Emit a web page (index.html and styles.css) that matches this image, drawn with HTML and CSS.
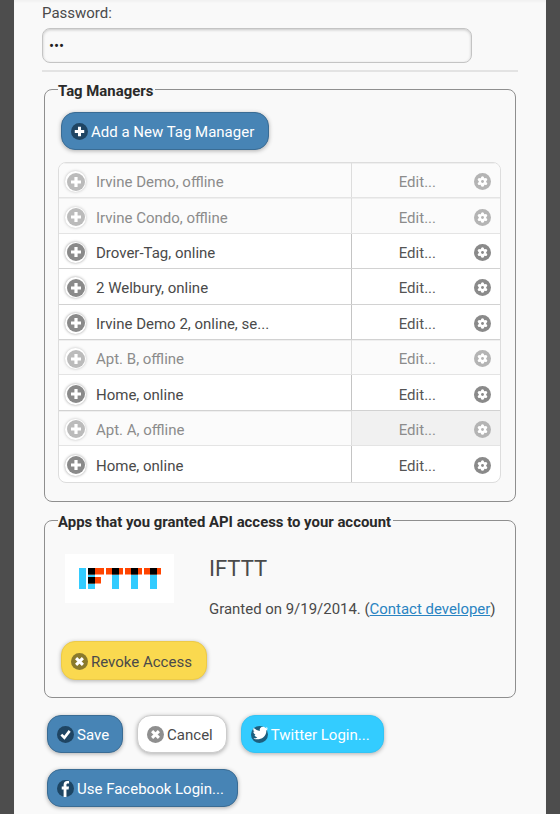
FILE: index.html
```html
<!DOCTYPE html>
<html lang="en">
<head>
<meta charset="utf-8">
<title>Account settings</title>
<link rel="stylesheet" href="styles.css">
</head>
<body>
<svg class="defs" width="0" height="0" aria-hidden="true">
  <symbol id="i-plus" viewBox="0 0 18 18"><circle cx="9" cy="9" r="9" fill="currentColor"/><path d="M9 4v10M4 9h10" stroke="#fff" stroke-width="3.200"/></symbol>
  <symbol id="i-x" viewBox="0 0 18 18"><circle cx="9" cy="9" r="9" fill="currentColor"/><path d="M5.400 5.400l7.200 7.200M12.600 5.400l-7.200 7.200" stroke="#fff" stroke-width="3.200"/></symbol>
  <symbol id="i-check" viewBox="0 0 18 18"><circle cx="9" cy="9" r="9" fill="currentColor"/><path d="M4.600 9.200l3.200 3.200 5.600-7.200" fill="none" stroke="#fff" stroke-width="2.800"/></symbol>
  <symbol id="i-gear" viewBox="0 0 18 18"><circle cx="9" cy="9" r="9" fill="currentColor"/><g fill="#fff"><circle cx="9" cy="9" r="3.900"/><circle cx="9" cy="5.100" r="1.600"/><circle cx="9" cy="12.900" r="1.600"/><circle cx="5.600" cy="7" r="1.600"/><circle cx="12.400" cy="7" r="1.600"/><circle cx="5.600" cy="11" r="1.600"/><circle cx="12.400" cy="11" r="1.600"/></g><circle cx="9" cy="9" r="1.500" fill="currentColor"/></symbol>
  <symbol id="i-tw" viewBox="0 0 18 18"><circle cx="9" cy="9" r="9" fill="#1d5f7e"/><path transform="translate(2.500 -.5) scale(.86)" d="M18 3.400c-.8.4-1.500.6-2.300.7.800-.5 1.400-1.300 1.700-2.200-.8.5-1.600.8-2.500 1A4 4 0 0 0 8 6.600C5 6.400 2.200 5 .4 2.700c-1 1.800-.5 4.100 1.200 5.300-.6 0-1.200-.2-1.700-.5 0 1.900 1.300 3.600 3.200 4-.6.200-1.200.2-1.800.1.500 1.600 2 2.700 3.700 2.800A8 8 0 0 1 0 16c5 2.500 16 1 16-9.800.8-.6 1.500-1.800 2-2.800z" fill="#fff"/></symbol>
  <symbol id="i-fb" viewBox="0 0 18 18"><circle cx="9" cy="9" r="9" fill="#1d4563"/><path d="M7 18V10H5V7h2V5c0-2.600 1.500-4 3.700-4 1 0 1.800.1 2.100.1v2.700h-1.400c-1.100 0-1.400.6-1.400 1.400V7h2.700l-.4 3h-2.300v8z" fill="#fff"/></symbol>
</svg>
<main class="page">
  <label class="field-label" for="pw">Password:</label>
  <div class="input" id="pw">•••</div>
  <hr class="rule">

  <fieldset class="box box-tags">
    <legend>Tag Managers</legend>
    <a class="btn btn-blue btn-add"><svg class="ico ico-dark"><use href="#i-plus"/></svg>Add a New Tag Manager</a>
    <ul class="list">
      <li class="row off"><span class="main"><span class="halo"><svg class="ico"><use href="#i-plus"/></svg></span>Irvine Demo, offline</span><span class="edit">Edit...<svg class="ico"><use href="#i-gear"/></svg></span></li>
      <li class="row off"><span class="main"><span class="halo"><svg class="ico"><use href="#i-plus"/></svg></span>Irvine Condo, offline</span><span class="edit">Edit...<svg class="ico"><use href="#i-gear"/></svg></span></li>
      <li class="row"><span class="main"><span class="halo"><svg class="ico"><use href="#i-plus"/></svg></span>Drover-Tag, online</span><span class="edit">Edit...<svg class="ico"><use href="#i-gear"/></svg></span></li>
      <li class="row"><span class="main"><span class="halo"><svg class="ico"><use href="#i-plus"/></svg></span>2 Welbury, online</span><span class="edit">Edit...<svg class="ico"><use href="#i-gear"/></svg></span></li>
      <li class="row"><span class="main"><span class="halo"><svg class="ico"><use href="#i-plus"/></svg></span>Irvine Demo 2, online, se...</span><span class="edit">Edit...<svg class="ico"><use href="#i-gear"/></svg></span></li>
      <li class="row off"><span class="main"><span class="halo"><svg class="ico"><use href="#i-plus"/></svg></span>Apt. B, offline</span><span class="edit">Edit...<svg class="ico"><use href="#i-gear"/></svg></span></li>
      <li class="row"><span class="main"><span class="halo"><svg class="ico"><use href="#i-plus"/></svg></span>Home, online</span><span class="edit">Edit...<svg class="ico"><use href="#i-gear"/></svg></span></li>
      <li class="row off"><span class="main"><span class="halo"><svg class="ico"><use href="#i-plus"/></svg></span>Apt. A, offline</span><span class="edit edit-hover">Edit...<svg class="ico"><use href="#i-gear"/></svg></span></li>
      <li class="row"><span class="main"><span class="halo"><svg class="ico"><use href="#i-plus"/></svg></span>Home, online</span><span class="edit">Edit...<svg class="ico"><use href="#i-gear"/></svg></span></li>
    </ul>
  </fieldset>

  <fieldset class="box box-apps">
    <legend>Apps that you granted API access to your account</legend>
    <div class="app">
      <div class="logo">
        <svg width="109" height="49" viewBox="0 0 109 49" role="img" aria-label="IFTTT logo">
          <g fill="#33ccff"><rect x="14" y="14" width="7" height="21"/><rect x="23" y="14" width="7" height="21"/><rect x="47" y="14" width="7" height="21"/><rect x="66" y="14" width="7" height="21"/><rect x="85" y="14" width="7" height="21"/></g>
          <g fill="#ff4400"><rect x="23" y="14" width="16" height="6.500"/><rect x="23" y="23" width="13" height="6.500"/><rect x="41" y="14" width="17" height="6.500"/><rect x="60" y="14" width="17" height="6.500"/><rect x="79" y="14" width="17" height="6.500"/></g>
          <g fill="#000"><rect x="23" y="14" width="7" height="6.500"/><rect x="23" y="23" width="7" height="6.500"/><rect x="47" y="14" width="7" height="6.500"/><rect x="66" y="14" width="7" height="6.500"/><rect x="85" y="14" width="7" height="6.500"/></g>
        </svg>
      </div>
      <div class="app-info">
        <h3 class="app-name">IFTTT</h3>
        <p class="app-note">Granted on 9/19/2014. (<a class="link">Contact developer</a>)</p>
      </div>
    </div>
    <a class="btn btn-yellow btn-revoke"><svg class="ico ico-olive"><use href="#i-x"/></svg>Revoke Access</a>
  </fieldset>

  <div class="actions">
    <a class="btn btn-blue"><svg class="ico ico-dark"><use href="#i-check"/></svg>Save</a>
    <a class="btn btn-white"><svg class="ico ico-grey"><use href="#i-x"/></svg>Cancel</a>
    <a class="btn btn-sky"><svg class="ico"><use href="#i-tw"/></svg>Twitter Login...</a>
    <a class="btn btn-blue"><svg class="ico"><use href="#i-fb"/></svg>Use Facebook Login...</a>
  </div>
</main>
</body>
</html>
```
FILE: styles.css
```css
* { box-sizing: border-box; }
html, body { margin: 0; height: 100%; }
body {
  background: #4d4d4d;
  font-family: Roboto, "Liberation Sans", sans-serif;
  color: #4a4a4a;
  overflow: hidden;
}
.defs { position: absolute; }
.page {
  width: 532px;
  height: 814px;
  margin-left: 14px;
  background: #f9f9f9;
  box-shadow: inset 0 2px 2px rgba(0,0,0,.03);
  padding: 4px 28px 0;
  overflow: hidden;
}
.field-label {
  display: block;
  font-size: 15px;
  line-height: 19px;
  color: #4a4a4a;
  margin-bottom: 5px;
}
.input {
  width: 430px;
  height: 35px;
  border: 1px solid #c4c4c4;
  border-radius: 8px;
  box-shadow: inset 0 1px 3px rgba(0,0,0,.2);
  background: #f9f9f9;
  padding-left: 6px;
  font-size: 15px;
  line-height: 35px;
  color: #222;
}
.rule {
  border: 0;
  border-top: 2px solid #e3e3e3;
  margin: 7px 0 0;
  width: 476px;
}
.box {
  margin: 0 0 0 2px;
  width: 472px;
  border: 1px solid #8f8f8f;
  border-radius: 8px;
  padding: 0 14px;
  min-inline-size: 0;
}
.box legend {
  font-size: 14.900px;
  font-weight: 700;
  color: #2a2a2a;
  line-height: 17px;
  padding: 4px 2px 0 0;
  margin-left: -1px;
}
.box-tags { margin-top: 7px; height: 423px; padding-top: 12px; }
.box-apps { margin-top: 8px; height: 188px; padding-top: 23px; }
.btn {
  display: inline-flex;
  align-items: center;
  height: 38px;
  padding: 2px 13px 0 9px;
  border-radius: 14px;
  font-size: 15px;
  white-space: nowrap;
  box-shadow: 0 1px 4px rgba(0,0,0,.3);
}
.ico { width: 17px; height: 17px; flex: none; }
.btn .ico { margin-right: 3px; margin-top: -1px; }
.ico-dark { color: #1f4563; }
.ico-olive { color: #8a7a2c; }
.ico-grey { color: #8f8f8f; }
.btn-blue { background: #4784b5; border: 1px solid #3a6c94; color: #fff; }
.btn-yellow { background: #fad94f; border: 1px solid #edcb47; color: #4a4a4a; }
.btn-white { background: #fff; border: 1px solid #ccc; color: #4a4a4a; }
.btn-sky { background: #33ccff; border: 1px solid #33c4f5; color: #fff; }
.btn-add { margin-left: 2px; width: 208px; }
.list {
  list-style: none;
  margin: 12px 0 0 -1px;
  padding: 0;
  width: 443px;
  border: 1px solid #ddd;
  border-radius: 8px;
  background: #fff;
  overflow: hidden;
}
.row {
  display: flex;
  height: 35.400px;
  align-items: stretch;
  font-size: 15px;
  color: #4a4a4a;
  border-bottom: 1px solid #d2d2d2;
}
.row.off {
  background: #fbfbfb;
  border-bottom-color: #e4e4e4;
  box-shadow: inset 0 1px 0 #efefef;
}
.row:last-child { border-bottom: 0; }
.row.off .main, .row.off .edit { color: #8c8c8c; }
.main {
  width: 293px;
  display: flex;
  align-items: center;
  padding: 4px 0 0 6px;
  border-right: 1px solid #c4c4c4;
  white-space: nowrap;
}
.row.off .main { border-right-color: #ddd; }
.halo {
  width: 21px;
  height: 21px;
  border-radius: 50%;
  background: #fff;
  box-shadow: 0 0 3px rgba(0,0,0,.4);
  display: flex;
  align-items: center;
  justify-content: center;
  margin: -1px 10px 0 0;
  color: #8a8a8a;
}
.halo .ico { width: 18px; height: 18px; }
.row.off .halo { box-shadow: 0 0 3px rgba(0,0,0,.25); color: #bbb; }
.edit {
  flex: 1;
  display: flex;
  align-items: center;
  justify-content: flex-end;
  padding: 4px 9px 0 0;
  color: #555;
}
.edit .ico { width: 17px; height: 17px; margin: -1px 0 0 38px; color: #8a8a8a; }
.row.off .edit .ico { color: #b4b4b4; }
.edit-hover { background: #f1f1f1; }
.app { display: flex; margin-left: 6px; }
.logo { width: 109px; height: 49px; background: #fff; }
.logo svg { display: block; }
.app-info { margin-left: 35px; }
.app-name {
  margin: 1px 0 0;
  font-size: 22px;
  font-weight: 400;
  line-height: 28px;
  color: #4a4a4a;
}
.app-note { margin: 17px 0 0; font-size: 14.950px; line-height: 18px; color: #4a4a4a; }
.link { color: #2a84c2; text-decoration: underline; }
.btn-revoke { margin: 23px 0 0 2px; width: 146px; height: 39px; }
.actions {
  display: flex;
  flex-wrap: wrap;
  gap: 16px 14px;
  margin: 17px 0 0 5px;
}
```
